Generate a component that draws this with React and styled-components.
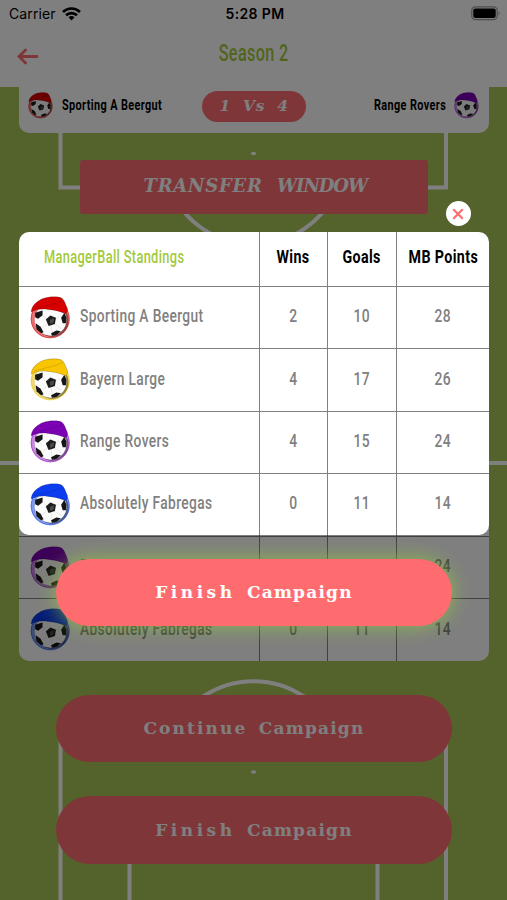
import React from 'react'
import { createGlobalStyle, styled } from 'styled-components'

const GREEN = '#a8c456'
const CORAL = '#ff6c70'

const standings = [
  { name: 'Sporting A Beergut', color: '#d60000', ring: '#e57373', wins: 2, goals: 10, points: 28 },
  { name: 'Bayern Large', color: '#f9c400', ring: '#ecd874', wins: 4, goals: 17, points: 26 },
  { name: 'Range Rovers', color: '#7c00b4', ring: '#c987e2', wins: 4, goals: 15, points: 24 },
  { name: 'Absolutely Fabregas', color: '#0b3cf0', ring: '#7f9ae8', wins: 0, goals: 11, points: 14 },
]

const Avatar = ({ team, size = 42 }) => (
  <AvatarSvg $size={size} viewBox="0 0 42 44">
    <circle cx="20.2" cy="23" r="19.6" fill={team.ring} />
    <circle cx="20.2" cy="23" r="19.2" fill="none" stroke={team.color} strokeOpacity="0.55" strokeWidth="0.8" />
    <circle cx="22" cy="24.6" r="16.6" fill="#000" opacity="0.4" />
    <circle cx="20.6" cy="24" r="16" fill="#fbfbfb" />
    <path
      d="M20.7 26 L13 20 M20.7 26 L29 21 M20.7 26 L32 33 M20.7 26 L12 32 M21 28 L22 36"
      stroke="#dcdcdc"
      strokeWidth="0.6"
      fill="none"
    />
    <path d="M15.8 23.800 L20.300 19.600 L26 21.800 L24.900 28.200 L18.600 30.300 Z" fill="#1c1c1c" />
    <path d="M20 24 L24 22.500 L23.500 27 L20 28 Z" fill="#4a4a4a" />
    <path d="M5 17 L12.500 14.500 L12.500 19.500 L8 22.800 L5 21.500 Z" fill="#161616" />
    <path d="M34.500 17 L36.600 22 L36.200 27.500 L32.800 27.500 L31.200 22 Z" fill="#161616" />
    <path d="M5.500 27.500 L10.500 31 L13.500 36.500 L11 37.500 L6.500 33.500 Z" fill="#161616" />
    <path d="M21 37.500 L26.500 34.800 L31 35.500 L27 39 L22 40 Z" fill="#161616" />
    <path
      d="M1 16 C1.500 9 8 4.500 13 2.600 C19 0.300 29 0.400 32 2.300 C34.500 4 35.500 8 37.500 12.500 C38 15 37 17.500 35.500 18 C29 14.500 23 14.300 18 13.500 C11 12.500 6 13.500 1 16 Z"
      fill={team.color}
      stroke="#000"
      strokeOpacity="0.35"
      strokeWidth="0.5"
    />
    <path d="M4 13 C14 10 24 9 33 4.500" fill="none" stroke="#000" strokeOpacity="0.18" strokeWidth="0.7" />
  </AvatarSvg>
)

const Pitch = () => (
  <PitchSvg viewBox="0 0 507 900" fill="none" stroke="#fff" strokeWidth="4">
    <path d="M60.500 80 V187.500 H446 V80" />
    <path d="M169.500 187.500 A90.500 90.500 0 0 0 337.500 187.500" />
    <path d="M0 463 H507" />
    <path d="M169.500 738 A90.500 90.500 0 0 1 337.500 738" />
    <path d="M60.500 900 V738 H446 V900" />
    <path d="M129.500 900 V830 H377.500 V900" />
    <ellipse cx="253.500" cy="153.500" rx="2.600" ry="1.800" fill="#fff" stroke="none" />
    <ellipse cx="253.500" cy="772" rx="2.600" ry="1.800" fill="#fff" stroke="none" />
  </PitchSvg>
)

const TableRow = ({ team }) => (
  <>
    <Cell $team>
      <Avatar team={team} />
      <TeamName $left $squeeze={0.763} $color="#808080">{team.name}</TeamName>
    </Cell>
    <Cell><Din $color="#808080">{team.wins}</Din></Cell>
    <Cell><Din $color="#808080">{team.goals}</Din></Cell>
    <Cell><Din $color="#808080">{team.points}</Din></Cell>
  </>
)

const Standings = () => (
  <Table>
    <Cell $first><Din $size={17.5} $weight={500} $squeeze={0.73} $left $color="#a3c93c">ManagerBall Standings</Din></Cell>
    <Cell><Din $size={19} $weight={700} $squeeze={0.75}>Wins</Din></Cell>
    <Cell><Din $size={19} $weight={700} $squeeze={0.75}>Goals</Din></Cell>
    <Cell><Din $size={19} $weight={700} $squeeze={0.75}>MB Points</Din></Cell>
    {standings.map((team) => <TableRow key={team.name} team={team} />)}
  </Table>
)

// the part of the standings that stays visible under the modal
const StandingsTail = () => (
  <Table $tail>
    <Cell />
    <Cell />
    <Cell />
    <Cell />
    {standings.slice(2).map((team) => <TableRow key={team.name} team={team} />)}
  </Table>
)

const App = () => {
  return (
    <Screen>
      <GlobalStyle />
      <Pitch />
      <Page>
        <StatusBar>
          <Carrier>
            Carrier
            <svg width="19" height="14" viewBox="0 0 19 14" fill="none" stroke="#000" strokeWidth="2.600">
              <path d="M1 5 A12.200 12.200 0 0 1 18 5" />
              <path d="M4 8.300 A8 8 0 0 1 15 8.300" />
              <path d="M9.500 13.500 L6.500 10.300 A4.400 4.400 0 0 1 12.500 10.300 Z" fill="#000" stroke="none" />
            </svg>
          </Carrier>
          <Clock>5:28 PM</Clock>
          <svg width="30" height="15" viewBox="0 0 30 15">
            <rect x="0.800" y="0.800" width="25.400" height="12.900" rx="3.600" fill="none" stroke="#000" strokeOpacity="0.4" strokeWidth="1.200" />
            <rect x="2.300" y="2.400" width="22.400" height="9.700" rx="2" fill="#000" />
            <path d="M27.700 5 Q29.700 7.200 27.700 9.500 Z" fill="#000" opacity="0.4" />
          </svg>
        </StatusBar>
        <NavBar>
          <svg width="22" height="18" viewBox="0 0 22 18" fill="none" stroke={CORAL} strokeWidth="2.800" strokeLinecap="round">
            <path d="M20 8.500 H2.400 M8.600 2 L2 8.500 L8.600 15" />
          </svg>
          <Title><Din $size={23.5} $weight={500} $squeeze={0.69} $color="#a3c93c">Season 2</Din></Title>
        </NavBar>
        <ScoreCard>
          <Side>
            <Avatar team={standings[0]} size={26} />
            <Din $left $size={14.5} $weight={700} $squeeze={0.75}>Sporting A Beergut</Din>
          </Side>
          <Score>1 Vs 4</Score>
          <Side $end>
            <Din $right $size={14.5} $weight={700} $squeeze={0.75}>Range Rovers</Din>
            <Avatar team={standings[2]} size={26} />
          </Side>
        </ScoreCard>
        <TransferWindow>
          <Word $spacing={0.75}>TRANSFER</Word> <Word $spacing={-1.1}>WINDOW</Word>
        </TransferWindow>
        <Lower>
          <StandingsTail />
          <PillButton $top={34}>
            <Word $spacing={2.1}>Continue</Word> <Word $spacing={1.2}>Campaign</Word>
          </PillButton>
          <PillButton $top={34}>
            <Word $spacing={3.5}>Finish</Word> <Word $spacing={1.2}>Campaign</Word>
          </PillButton>
        </Lower>
      </Page>
      <Overlay>
        <CloseButton aria-label="Close">
          <svg width="12" height="12" viewBox="0 0 12 12" stroke={CORAL} strokeWidth="2.100" strokeLinecap="round">
            <path d="M1.800 1.800 L10.200 10.200 M10.200 1.800 L1.800 10.200" />
          </svg>
        </CloseButton>
        <Standings />
        <PillButton $top={23.5} $glow>
          <Word $spacing={3.5}>Finish</Word> <Word $spacing={1.2}>Campaign</Word>
        </PillButton>
      </Overlay>
    </Screen>
  )
}

const GlobalStyle = createGlobalStyle`
  body {
    margin: 0;
    overflow: hidden;
  }
  * {
    box-sizing: border-box;
  }
  svg {
    display: block;
    flex: none;
  }
`
const Screen = styled.div`
  position: relative;
  width: 507px;
  height: 900px;
  overflow: hidden;
  background: ${GREEN};
  font-family: Roboto, "Liberation Sans", sans-serif;
`
const PitchSvg = styled.svg`
  position: absolute;
  inset: 0;
  width: 507px;
  height: 900px;
`
const Page = styled.div`
  position: relative;
  display: flex;
  flex-direction: column;
  height: 900px;
`
const StatusBar = styled.div`
  display: grid;
  grid-template-columns: 1fr auto 1fr;
  align-items: center;
  height: 27px;
  padding: 0 6px 0 9px;
  background: #fff;
  font-family: Inter, sans-serif;
  font-size: 14px;

  > svg {
    justify-self: end;
  }
`
const Carrier = styled.div`
  display: flex;
  align-items: center;
  gap: 6px;
  letter-spacing: 0.1px;
`
const Clock = styled.div`
  font-weight: 600;
  font-size: 14px;
  letter-spacing: 0.35px;
`
const NavBar = styled.header`
  display: grid;
  grid-template-columns: 22px 1fr 22px;
  align-items: center;
  height: 59.5px;
  padding: 0 17px;
  background: #fff;
`
const Title = styled.h1`
  margin: -7px 0 0;
  text-align: center;
  font-size: 23px;
`
/* narrow lettering: Roboto squeezed horizontally */
const Din = styled.span`
  display: inline-block;
  white-space: nowrap;
  font-size: ${({ $size }) => $size || 18}px;
  font-weight: ${({ $weight }) => $weight || 500};
  line-height: 1.2;
  letter-spacing: 0.5px;
  color: ${({ $color }) => $color || '#000'};
  transform: scaleX(${({ $squeeze }) => $squeeze || 0.77});
  transform-origin: ${({ $left, $right }) => ($left ? 'left' : $right ? 'right' : 'center')};
`
const TeamName = styled(Din)`
  margin-bottom: 3px;
`
const Word = styled.span`
  letter-spacing: ${({ $spacing }) => $spacing}px;
`
const ScoreCard = styled.div`
  display: grid;
  grid-template-columns: 1fr 104px 1fr;
  align-items: center;
  height: 46px;
  margin: 0 18px 0 19px;
  padding: 0 9px 7px;
  background: #fff;
  border-radius: 0 0 10px 10px;
`
const Side = styled.div`
  display: flex;
  align-items: center;
  justify-content: ${({ $end }) => ($end ? 'flex-end' : 'flex-start')};
  gap: 8px;
  min-width: 0;
`
const Score = styled.div`
  height: 31px;
  border-radius: 16px;
  background: ${CORAL};
  color: #fff;
  text-align: center;
  font: italic 700 15.5px/29px "DejaVu Serif", serif;
  letter-spacing: 0.5px;
  word-spacing: 6.5px;
`
const TransferWindow = styled.div`
  flex: none;
  height: 53.5px;
  margin: 27.5px 79.5px 0 80px;
  padding-left: 3px;
  border-radius: 3px;
  background: ${CORAL};
  color: #fff;
  text-align: center;
  font: italic 700 18px/52px "DejaVu Serif", serif;
  word-spacing: 8px;
  white-space: nowrap;
`
const Lower = styled.div`
  margin-top: 303px;
`
const Table = styled.div`
  display: grid;
  grid-template-columns: 241px 68px 69px 92px;
  grid-template-rows: ${({ $tail }) => ($tail ? '20.6px 62.3px 61.3px' : '55px 62.3px 62.3px 62.3px 61.3px')};
  width: 470px;
  margin-left: 19px;
  overflow: hidden;
  border-radius: 10px;
  background: #fff;
`
const Cell = styled.div`
  display: flex;
  align-items: center;
  justify-content: ${({ $team, $first }) => ($team || $first ? 'flex-start' : 'center')};
  gap: 8.5px;
  min-width: 0;
  padding: ${({ $team, $first }) => ($team ? '0 0 0 10.5px' : $first ? '0 0 4px 24.5px' : '0 0 3px')};
  border-right: 1px solid #808080;
  border-bottom: 1px solid #808080;

  &:nth-child(4n) {
    border-right: none;
  }
  &:nth-last-child(-n + 4) {
    border-bottom: none;
  }
`
const AvatarSvg = styled.svg`
  width: ${({ $size }) => $size}px;
  height: ${({ $size }) => $size * 1.04}px;
`
const PillButton = styled.button`
  display: block;
  flex: none;
  width: 396px;
  height: 67.5px;
  margin: ${({ $top }) => $top}px 0 0 56px;
  padding: 0;
  border: none;
  border-radius: 34px;
  background: ${CORAL};
  color: #fff;
  font: 700 17px "DejaVu Serif", serif;
  word-spacing: 5.5px;
  box-shadow: ${({ $glow }) => ($glow ? '0 0 20px rgba(150, 205, 60, 0.75)' : 'none')};
`
const Overlay = styled.div`
  position: absolute;
  inset: 0;
  display: flex;
  flex-direction: column;
  padding-top: 201px;
  background: rgba(0, 0, 0, 0.5);
`
const CloseButton = styled.button`
  display: flex;
  align-items: center;
  justify-content: center;
  align-self: flex-end;
  width: 25px;
  height: 25px;
  margin: 0 36.5px 6px 0;
  padding: 0;
  border: none;
  border-radius: 50%;
  background: #fff;
`

export default App
